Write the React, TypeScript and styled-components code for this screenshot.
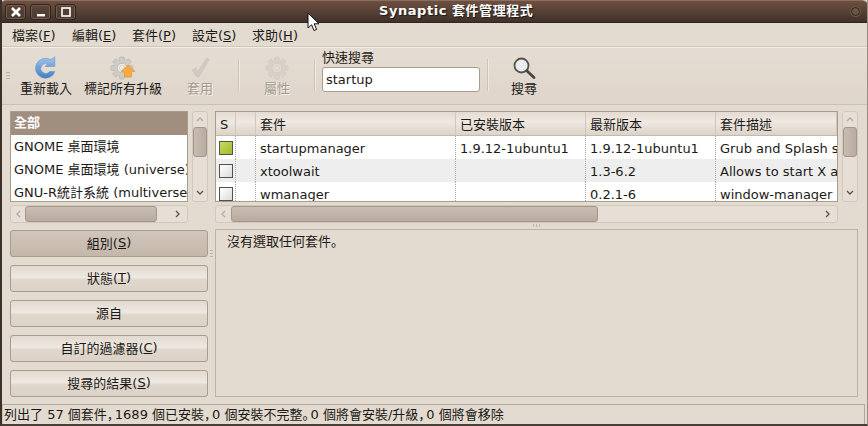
import React from 'react';
import styled, { createGlobalStyle } from 'styled-components';

const cjk = `"DejaVu Sans", "Noto Sans CJK TC", sans-serif`;

const Global = createGlobalStyle`
    html, body {
        margin: 0;
        padding: 0;
        background: #e3dad0;
    }
    * {
        box-sizing: border-box;
    }
`

function Chevron({ dir }: { dir: 'up' | 'down' | 'left' | 'right' }) {
    const points = {
        up: '1,5 4,2 7,5',
        down: '1,3 4,6 7,3',
        left: '5,1 2,4 5,7',
        right: '3,1 6,4 3,7',
    }[dir];
    const color = dir === 'up' || dir === 'left' ? '#b5aca3' : '#5c5248';
    return (
        <svg width="8" height="8" viewBox="0 0 8 8">
            <polyline points={points} fill="none" stroke={color} strokeWidth="1.3" />
        </svg>
    );
}

function VScroll({ start, size }: { start: number; size: number }) {
    return (
        <VTrack>
            <Chevron dir="up" />
            <VThumb $start={start} $size={size} />
            <VEnd><Chevron dir="down" /></VEnd>
        </VTrack>
    );
}

function HScroll({ start, size }: { start: number; size: number }) {
    return (
        <HTrack>
            <Chevron dir="left" />
            <HThumb $start={start} $size={size} />
            <HEnd><Chevron dir="right" /></HEnd>
        </HTrack>
    );
}

function Gear({ color, hole, edge }: { color: string; hole: string; edge: string }) {
    const teeth = [0, 45, 90, 135, 180, 225, 270, 315];
    return (
        <>
            {teeth.map(a => (
                <rect key={a} x="9.6" y="1" width="4.8" height="5" rx="1" fill={color} stroke={edge} strokeWidth="0.5" transform={`rotate(${a} 12 12)`} />
            ))}
            <circle cx="12" cy="12" r="7.6" fill={color} />
            <circle cx="12" cy="12" r="4.8" fill={hole} stroke={edge} strokeWidth="0.6" />
            <circle cx="12" cy="12" r="2.6" fill="none" stroke={color} strokeWidth="0.8" />
        </>
    );
}

function ReloadIcon() {
    return (
        <svg width="24" height="24" viewBox="0 0 24 24">
            <defs>
                <linearGradient id="rl" x1="0" y1="0" x2="0" y2="1">
                    <stop offset="0" stopColor="#a4c6ea" />
                    <stop offset="1" stopColor="#3f7fc6" />
                </linearGradient>
            </defs>
            <path d="M21 15.5A10 10 0 1 1 16.6 3.6L20.8 0.8V10.5H11L13.9 8A4.9 4.9 0 1 0 15.6 15.5Z" fill="url(#rl)" stroke="#5a8cc2" strokeWidth="0.5" />
        </svg>
    );
}

function UpgradeIcon() {
    return (
        <svg width="26" height="24" viewBox="0 0 26 24">
            <Gear color="#cfccc7" hole="#efebe5" edge="#a9a6a0" />
            <path d="M18 9L25 15.5H21.5V21H14.5V15.5H11Z" fill="#f7ab45" stroke="#e08a20" strokeWidth="0.6" />
        </svg>
    );
}

function ApplyIcon() {
    return (
        <svg width="24" height="24" viewBox="0 0 24 24">
            <path d="M4 14L7.5 12L10 15.5L19 2L21 3.5L11 20.5H8.5Z" fill="#d2cbc2" stroke="#c6bfb5" strokeWidth="0.6" />
        </svg>
    );
}

function PropsIcon() {
    return (
        <svg width="24" height="24" viewBox="0 0 24 24">
            <Gear color="#d8d1c8" hole="#e3dbd1" edge="#cfc7bd" />
        </svg>
    );
}

function SearchIcon() {
    return (
        <svg width="24" height="24" viewBox="0 0 24 24">
            <circle cx="9.5" cy="9.5" r="7" fill="#e9edf0" stroke="#55524d" strokeWidth="1.8" />
            <path d="M14.8 14.8L22 21.5" stroke="#4a4640" strokeWidth="2.8" strokeLinecap="round" />
        </svg>
    );
}

function Mnemonic({ label, k }: { label: string; k: string }) {
    return <>{label}(<u>{k}</u>)</>;
}

const menus = [
    ['檔案', 'F'],
    ['編輯', 'E'],
    ['套件', 'P'],
    ['設定', 'S'],
    ['求助', 'H'],
];

const filters: { label: string; k?: string; active?: boolean }[] = [
    { label: '組別', k: 'S', active: true },
    { label: '狀態', k: 'T' },
    { label: '源自' },
    { label: '自訂的過濾器', k: 'C' },
    { label: '搜尋的結果', k: 'S' },
];

const packages = [
    { name: 'startupmanager', installed: '1.9.12-1ubuntu1', latest: '1.9.12-1ubuntu1', desc: 'Grub and Splash s', on: true },
    { name: 'xtoolwait', installed: '', latest: '1.3-6.2', desc: 'Allows to start X a', on: false },
    { name: 'wmanager', installed: '', latest: '0.2.1-6', desc: 'window-manager', on: false },
];

const columns = '20px 20px 200px 130px 130px 1fr';

function App() {
    return (
        <Window>
            <Global />
            <TitleBar>
                <WinButtons>
                    <WinButton>
                        <svg width="12" height="12" viewBox="0 0 12 12">
                            <path d="M2 2L10 10M10 2L2 10" stroke="#fff" strokeWidth="2.6" />
                        </svg>
                    </WinButton>
                    <WinButton>
                        <svg width="12" height="12" viewBox="0 0 12 12">
                            <rect x="2" y="8" width="8" height="2.4" fill="#fff" />
                        </svg>
                    </WinButton>
                    <WinButton>
                        <svg width="12" height="12" viewBox="0 0 12 12">
                            <rect x="2" y="2" width="8" height="8" fill="none" stroke="#fff" strokeWidth="1.6" />
                        </svg>
                    </WinButton>
                </WinButtons>
                <Title>Synaptic 套件管理程式</Title>
                <TitleDot />
            </TitleBar>

            <MenuBar>
                {menus.map(([label, k]) => (
                    <MenuItem key={label}><Mnemonic label={label} k={k} /></MenuItem>
                ))}
            </MenuBar>

            <ToolBar>
                <Grip />
                <ToolButton $w={54} $ml={9}><ReloadIcon /><ToolLabel>重新載入</ToolLabel></ToolButton>
                <ToolButton $w={80} $ml={10}><UpgradeIcon /><ToolLabel>標記所有升級</ToolLabel></ToolButton>
                <ToolButton $w={40} $ml={17}><ApplyIcon /><ToolLabel $off>套用</ToolLabel></ToolButton>
                <ToolSep $ml={18} />
                <ToolButton $w={40} $ml={18}><PropsIcon /><ToolLabel $off>屬性</ToolLabel></ToolButton>
                <ToolSep $ml={17} />
                <SearchBox>
                    <SearchLabel>快速搜尋</SearchLabel>
                    <SearchInput readOnly value="startup" />
                </SearchBox>
                <ToolSep $ml={7} />
                <ToolButton $w={40} $ml={16}><SearchIcon /><ToolLabel>搜尋</ToolLabel></ToolButton>
            </ToolBar>

            <Panes>
                <LeftPane>
                    <ListRow>
                        <GroupList>
                            <GroupItem $selected>全部</GroupItem>
                            <GroupItem>GNOME 桌面環境</GroupItem>
                            <GroupItem>GNOME 桌面環境 (universe)</GroupItem>
                            <GroupItem>GNU-R統計系統 (multiverse)</GroupItem>
                        </GroupList>
                        <VScroll start={3} size={30} />
                    </ListRow>
                    <ShortH>
                        <HScroll start={2} size={132} />
                    </ShortH>
                    <FilterButtons>
                        {filters.map(f => (
                            <FilterButton key={f.label + f.k} $active={f.active}>
                                {f.k ? <Mnemonic label={f.label} k={f.k} /> : f.label}
                            </FilterButton>
                        ))}
                    </FilterButtons>
                </LeftPane>

                <SideGrip />

                <RightPane>
                    <ListRow>
                        <Tree>
                            <HeaderRow>
                                <HeadCell>S</HeadCell>
                                <HeadCell />
                                <HeadCell>套件</HeadCell>
                                <HeadCell>已安裝版本</HeadCell>
                                <HeadCell>最新版本</HeadCell>
                                <HeadCell>套件描述</HeadCell>
                            </HeaderRow>
                            {packages.map((p, i) => (
                                <PackageRow key={p.name} $odd={i % 2 === 1}>
                                    <Cell><CheckBox $on={p.on} /></Cell>
                                    <Cell />
                                    <Cell>{p.name}</Cell>
                                    <Cell>{p.installed}</Cell>
                                    <Cell>{p.latest}</Cell>
                                    <Cell>{p.desc}</Cell>
                                </PackageRow>
                            ))}
                        </Tree>
                        <VScroll start={3} size={30} />
                    </ListRow>
                    <WideH>
                        <HScroll start={3} size={367} />
                    </WideH>
                    <SplitGrip />
                    <Details>沒有選取任何套件<LowMark>。</LowMark></Details>
                </RightPane>
            </Panes>

            <StatusBar>
                列出了 57 個套件<Punct>，</Punct>1689 個已安裝<Punct>，</Punct>0 個安裝不完整<Punct>。</Punct>0 個將會安裝/升級<Punct>，</Punct>0 個將會移除
            </StatusBar>

            <Pointer width="14" height="20" viewBox="0 0 14 20">
                <path d="M1 1V16L4.6 12.8L7 18.5L9.6 17.4L7.2 11.8H12Z" fill="#fff" stroke="#111" strokeWidth="1" />
            </Pointer>
        </Window>
    );
}

export default App;


const Window = styled.div`
    position: relative;
    width: 868px;
    height: 426px;
    overflow: hidden;
    display: flex;
    flex-direction: column;
    background: #e3dad0;
    border-left: 2px solid #3c3029;
    border-right: 1px solid #9a8e82;
    border-bottom: 2px solid #4a3f36;
    font-family: ${cjk};
    font-size: 13px;
    color: #1c1a17;
`

const TitleBar = styled.div`
    height: 23px;
    margin: 0 -1px 0 -2px;
    flex: none;
    display: flex;
    align-items: center;
    position: relative;
    padding-left: 5px;
    border-top: 1px solid #8a6f5f;
    border-bottom: 1px solid #2f2620;
    border-radius: 6px 6px 0 0;
    background: linear-gradient(#6e5041, #3f312a);
`

const WinButtons = styled.div`
    display: flex;
    gap: 4px;
`

const WinButton = styled.div`
    width: 21px;
    height: 16px;
    display: flex;
    align-items: center;
    justify-content: center;
    border: 1px solid #2e2420;
    border-radius: 3px;
    box-shadow: inset 0 0 0 1px #75594a;
    background: linear-gradient(#5c4438, #4c3a30);
`

const Title = styled.div`
    position: absolute;
    left: 379px;
    top: 1px;
    color: #fff;
    font-weight: 700;
    font-size: 13px;
    letter-spacing: 0.55px;
    line-height: 18px;
    white-space: nowrap;
    text-shadow: 1px 1px 1px #1c1512;
`

const TitleDot = styled.div`
    position: absolute;
    right: 8px;
    top: 6px;
    width: 9px;
    height: 9px;
    border-radius: 50%;
    border: 1px solid #2f2620;
    background: #6b5548;
    box-shadow: 0 0 0 1px #6d5647;
`

const MenuBar = styled.div`
    height: 24px;
    flex: none;
    display: flex;
    padding: 2px 0 0 10px;
    gap: 16px;
    align-items: center;
    border-bottom: 1px solid #cfc5ba;
    background: #e3dad0;
`

const MenuItem = styled.span`
    width: 44px;
    white-space: nowrap;
    line-height: 20px;
`

const ToolBar = styled.div`
    height: 58px;
    flex: none;
    display: flex;
    align-items: flex-start;
    border-top: 1px solid #f3ede6;
    border-bottom: 1px solid #cbc1b6;
    background: linear-gradient(#e5ddd3, #dfd5ca);
`

const Grip = styled.div`
    width: 4px;
    height: 8px;
    margin: 24px 0 0 4px;
    flex: none;
    background: repeating-linear-gradient(#b9b0a5 0 1px, transparent 1px 3px);
`

const ToolButton = styled.div<{ $w: number; $ml: number }>`
    width: ${p => p.$w}px;
    margin-left: ${p => p.$ml}px;
    flex: none;
    display: flex;
    flex-direction: column;
    align-items: center;
    padding-top: 8px;
`

const ToolLabel = styled.span<{ $off?: boolean }>`
    white-space: nowrap;
    line-height: 18px;
    color: ${p => (p.$off ? '#a59c92' : '#1c1a17')};
    text-shadow: ${p => (p.$off ? '1px 1px 0 #f5f0ea' : 'none')};
`

const ToolSep = styled.div<{ $ml: number }>`
    width: 1px;
    height: 32px;
    margin: 11px 0 0 ${p => p.$ml}px;
    flex: none;
    background: #cec4b9;
    box-shadow: 1px 0 0 #efe9e2;
`

const SearchBox = styled.div`
    width: 158px;
    margin-left: 7px;
    flex: none;
    display: flex;
    flex-direction: column;
`

const SearchLabel = styled.span`
    padding-top: 1px;
    line-height: 18px;
    height: 19px;
`

const SearchInput = styled.input`
    width: 158px;
    height: 25px;
    padding: 0 3px;
    border: 1px solid #a89c8f;
    border-radius: 3px;
    outline: none;
    background: #fff;
    font-family: ${cjk};
    font-size: 13px;
    color: #1c1a17;
`

const Panes = styled.div`
    flex: 1;
    min-height: 0;
    display: flex;
    padding: 6px 9px 6px 8px;
`

const LeftPane = styled.div`
    width: 198px;
    flex: none;
    display: flex;
    flex-direction: column;
`

const SideGrip = styled.div`
    width: 3px;
    height: 8px;
    margin: 139px 2px 0 2px;
    flex: none;
    background: repeating-linear-gradient(#bdb4a9 0 1px, transparent 1px 3px);
`

const RightPane = styled.div`
    flex: 1;
    min-width: 0;
    display: flex;
    flex-direction: column;
`

const ListRow = styled.div`
    height: 91px;
    flex: none;
    display: flex;
    gap: 4px;
`

const GroupList = styled.div`
    flex: 1;
    min-width: 0;
    overflow: hidden;
    background: #fff;
    border: 1px solid #a89c8f;
`

const GroupItem = styled.div<{ $selected?: boolean }>`
    height: 23px;
    padding-left: 3px;
    line-height: ${p => (p.$selected ? 22 : 24)}px;
    white-space: nowrap;
    overflow: hidden;
    font-weight: ${p => (p.$selected ? 700 : 400)};
    color: ${p => (p.$selected ? '#fff' : '#1c1a17')};
    background: ${p => (p.$selected ? '#a08e7e' : '#fff')};
`

const VTrack = styled.div`
    width: 16px;
    flex: none;
    display: flex;
    flex-direction: column;
    align-items: center;
    padding-top: 4px;
    border: 1px solid #d2c9be;
    border-radius: 3px;
    background: #e7dfd6;
`

const VThumb = styled.div<{ $start: number; $size: number }>`
    width: 14px;
    height: ${p => p.$size}px;
    margin-top: ${p => p.$start}px;
    border: 1px solid #a3968a;
    border-radius: 3px;
    background: linear-gradient(90deg, #c8bcb0, #b9aca0);
`

const VEnd = styled.div`
    margin-top: auto;
    height: 17px;
`

const HTrack = styled.div`
    height: 18px;
    display: flex;
    align-items: center;
    padding-left: 4px;
    padding-right: 4px;
    border: 1px solid #d2c9be;
    border-radius: 3px;
    background: #e7dfd6;
`

const HThumb = styled.div<{ $start: number; $size: number }>`
    height: 16px;
    width: ${p => p.$size}px;
    margin-left: ${p => p.$start}px;
    border: 1px solid #a3968a;
    border-radius: 3px;
    background: linear-gradient(#c9bdb1, #b8aa9e);
`

const HEnd = styled.div`
    margin-left: auto;
    display: flex;
    padding-right: 2px;
`

const ShortH = styled.div`
    width: 178px;
    margin-top: 3px;
`

const WideH = styled.div`
    width: 623px;
    margin-top: 3px;
`

const FilterButtons = styled.div`
    display: flex;
    flex-direction: column;
    gap: 8px;
    margin-top: 7px;
`

const FilterButton = styled.div<{ $active?: boolean }>`
    height: 27px;
    padding-bottom: 2px;
    display: flex;
    align-items: center;
    justify-content: center;
    white-space: pre;
    border: 1px solid #a89c8f;
    border-radius: 3px;
    background: ${p =>
        p.$active
            ? 'linear-gradient(#d1c6ba, #c4b8ab)'
            : 'linear-gradient(#e2d9cf, #efe9e3 45%, #e0d7cc 55%, #dcd2c7)'};
`

const Tree = styled.div`
    flex: 1;
    min-width: 0;
    overflow: hidden;
    background: #fff;
    border: 1px solid #a89c8f;
`

const HeaderRow = styled.div`
    height: 24px;
    display: grid;
    grid-template-columns: ${columns};
    background: linear-gradient(#e4dbd1, #efe9e3 40%, #ddd3c8);
    border-bottom: 1px solid #c5baae;
`

const HeadCell = styled.div`
    padding-left: 4px;
    line-height: 25px;
    white-space: nowrap;
    overflow: hidden;
    border-right: 1px solid #d0c6bb;
`

const PackageRow = styled.div<{ $odd: boolean }>`
    height: 23px;
    display: grid;
    grid-template-columns: ${columns};
    background: ${p => (p.$odd ? '#eeeeee' : '#fff')};
`

const Cell = styled.div`
    padding-left: 4px;
    line-height: 25px;
    white-space: nowrap;
    overflow: hidden;
    border-right: 1px dotted #a9a9a9;

    &:last-child {
        border-right: 0;
    }
`

const CheckBox = styled.div<{ $on: boolean }>`
    width: 14px;
    height: 14px;
    margin: 5px 0 0 -1px;
    border: 1px solid #55504a;
    background: ${p => (p.$on ? 'linear-gradient(135deg, #c9dc62, #9dbb2c)' : 'linear-gradient(135deg, #fff, #dcdcdc)')};
`

const SplitGrip = styled.div`
    width: 7px;
    height: 3px;
    margin: 1px auto 2px 318px;
    flex: none;
    background: repeating-linear-gradient(90deg, #bdb4a9 0 1px, transparent 1px 3px);
`

const Details = styled.div`
    flex: 1;
    min-height: 0;
    padding: 2px 11px;
    line-height: 18px;
    border: 1px solid #bdb2a6;
`

const LowMark = styled.span`
    font-family: "Noto Sans CJK SC", sans-serif;
`

const StatusBar = styled.div`
    height: 20px;
    flex: none;
    margin: 1px 2px 0 0;
    padding-left: 1px;
    line-height: 18px;
    white-space: nowrap;
    overflow: hidden;
    border: 1px solid #b3a89c;
    border-left-color: #cbc1b6;
    border-bottom: 0;
`

const Punct = styled.span`
    font-family: "Noto Sans CJK SC", sans-serif;
    letter-spacing: -5px;
`

const Pointer = styled.svg`
    position: absolute;
    left: 305px;
    top: 12px;
`
